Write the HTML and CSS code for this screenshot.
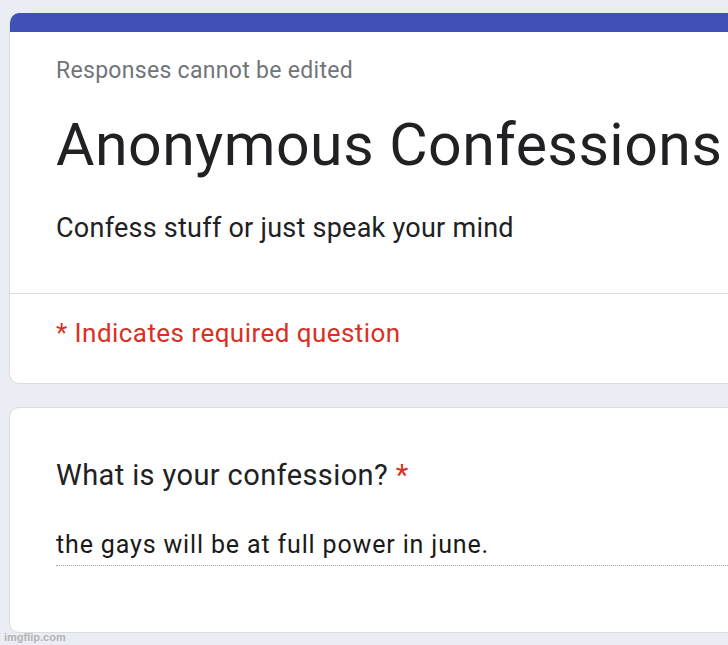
FILE: index.html
```html
<!DOCTYPE html>
<html lang="en">

<head>
  <meta charset="UTF-8">
  <title>Anonymous Confessions</title>
  <link rel="stylesheet" href="styles.css">
</head>

<body>

  <div class="page">
    <div class="card header-card">
      <div class="top-bar"></div>
      <div class="header-body">
        <p class="note">Responses cannot be edited</p>
        <h1 class="title">Anonymous Confessions</h1>
        <p class="desc">Confess stuff or just speak your mind</p>
      </div>
      <div class="required-row">
        <p class="required">* Indicates required question</p>
      </div>
    </div>

    <div class="card question-card">
      <h2 class="question">What is your confession? <span class="star">*</span></h2>
      <div class="answer">the gays will be at full power in june.</div>
    </div>
  </div>

  <div class="watermark">imgflip.com</div>

</body>
</html>
```

FILE: styles.css
```css
body { margin: 0; background: #ebedf5; font-family: Roboto, "Noto Sans", sans-serif; color: #202124; overflow: hidden; height: 645px; position: relative; }
.page { padding: 13px 0 0 9px; width: 780px; display: flex; flex-direction: column; gap: 23px; }
.card { background: #fff; border: 1px solid #dadce0; border-radius: 10px; overflow: hidden; }
.header-card { border-top: none; }
.top-bar { height: 19px; background: #3f51b5; }
p, h1, h2 { margin: 0; font-weight: 400; }
.header-body { padding: 27px 0 51px 46px; border-bottom: 1px solid #dadce0; }
.note { font-size: 23px; line-height: 23px; color: #70757a; letter-spacing: 0.3px; }
.title { font-size: 59px; line-height: 59px; margin-top: 33px; color: #202124; letter-spacing: 0.5px; }
.desc { font-size: 27px; line-height: 27px; margin-top: 41px; letter-spacing: 0.25px; }
.required-row { padding: 26px 0 37px 46px; }
.required { font-size: 26px; line-height: 26px; color: #d93025; letter-spacing: 0.45px; }
.question-card { padding: 53px 0 66px 46px; }
.question { font-size: 29px; line-height: 29px; letter-spacing: 0.4px; }
.star { color: #d93025; }
.answer { margin-top: 42px; font-size: 25px; line-height: 25px; padding-bottom: 8px; border-bottom: 1px dotted #9e9e9e; letter-spacing: 0.85px; color: #1a1a1a; }
.watermark { position: absolute; left: 4px; bottom: 2px; font-family: "Liberation Sans", Arial, sans-serif; font-weight: bold; font-size: 11px; color: #b4b4b4; }
```
